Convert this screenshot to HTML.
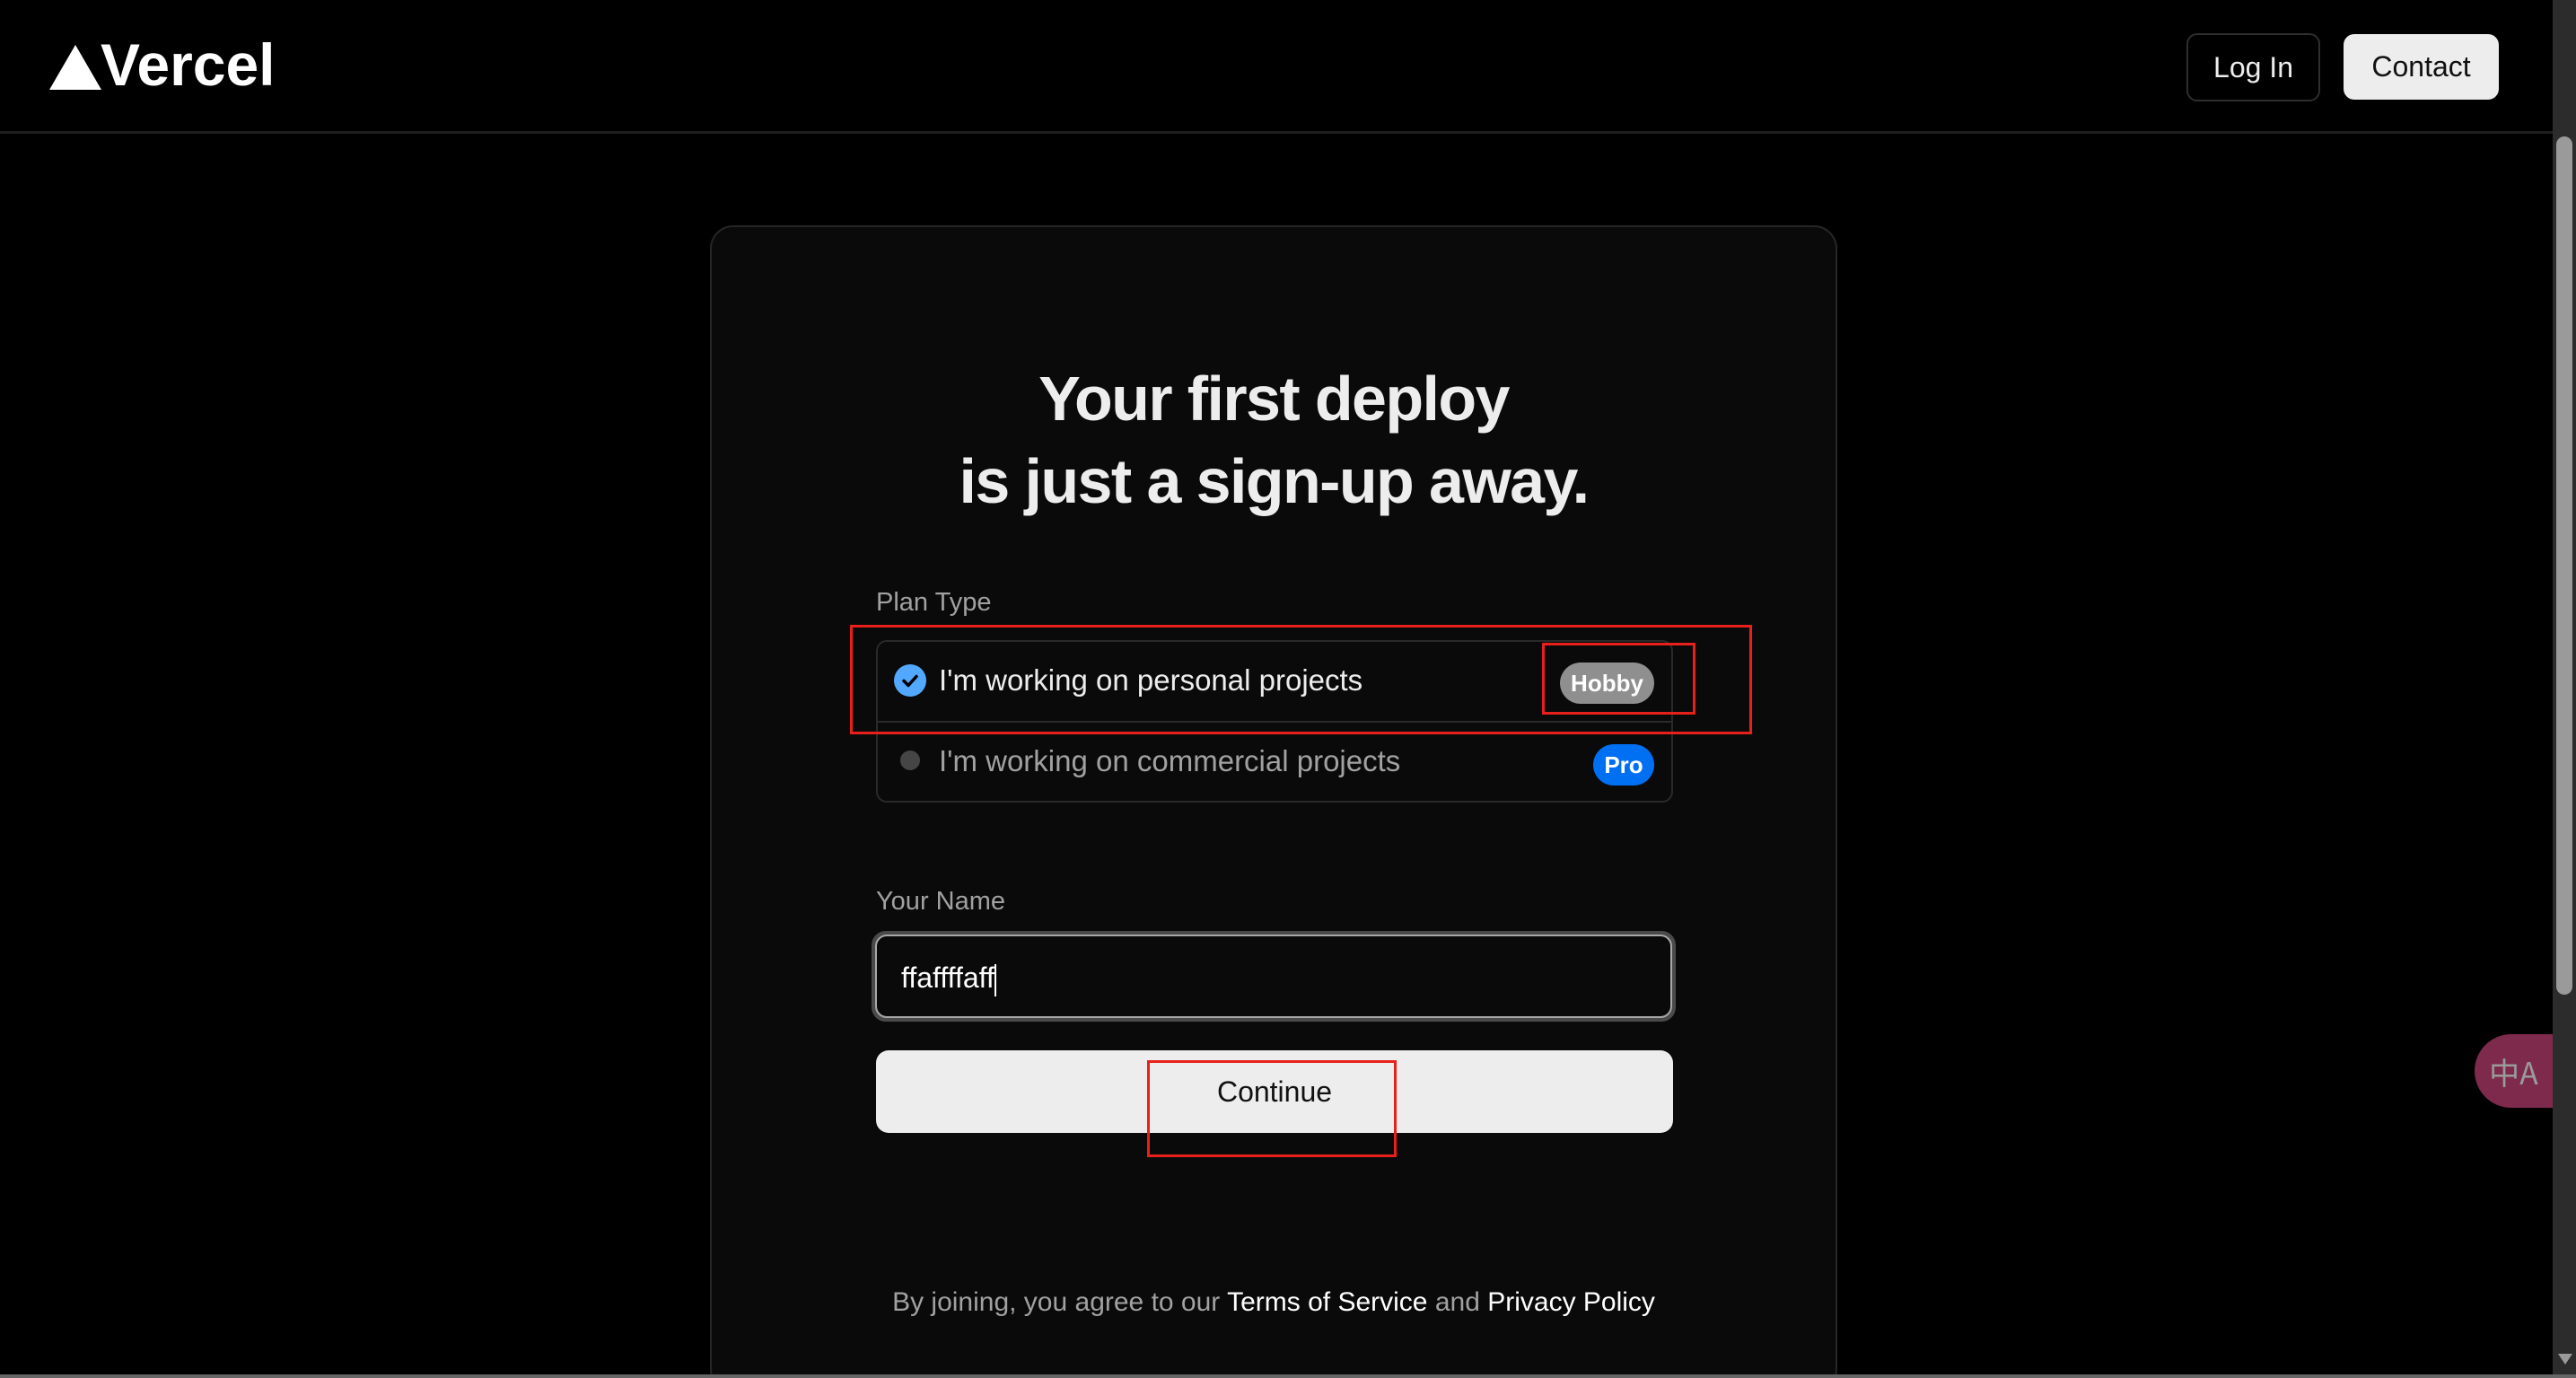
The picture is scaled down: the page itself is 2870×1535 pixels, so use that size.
<!DOCTYPE html>
<html style="overflow:hidden;width:2870px;height:1535px"><head><meta charset="utf-8"><style>
*{box-sizing:border-box;margin:0;padding:0}
body{width:2870px;height:1535px;background:#000;font-family:"Liberation Sans",sans-serif;position:relative;overflow:hidden;color:#ededed}
.abs{position:absolute}
.hdr{left:0;top:0;width:2844px;height:149px;border-bottom:3px solid #1f1f1f}
.btn{position:absolute;display:flex;align-items:center;justify-content:center;font-size:32px;border-radius:12px}
.card{left:791px;top:251px;width:1256px;height:1300px;background:#0a0a0a;border:2px solid #262626;border-radius:26px}
h1{position:absolute;left:791px;width:1256px;text-align:center;font-size:70px;font-weight:bold;letter-spacing:-1.6px;color:#ededed;line-height:92px;top:398px}
.lbl{font-size:29px;color:#a1a1a1}
.red{position:absolute;border:3px solid #e8201c}
</style></head><body>
<div class="abs hdr"></div>
<svg class="abs" style="left:55px;top:50px" width="58" height="50" viewBox="0 0 58 50"><polygon points="29,0 58,50 0,50" fill="#fff"/></svg>
<div class="abs" style="left:112px;top:36px;font-size:66px;font-weight:bold;color:#fff;line-height:72px">Vercel</div>
<div class="btn" style="left:2436px;top:37px;width:149px;height:76px;border:2px solid #2e2e2e;color:#ededed">Log In</div>
<div class="btn" style="left:2611px;top:38px;width:173px;height:73px;background:#ededed;color:#111">Contact</div>
<div class="abs card"></div>
<div class="abs" style="left:2844px;top:0;width:26px;height:1535px;background:#2c2c2c"></div>
<div class="abs" style="left:2848px;top:152px;width:18px;height:956px;background:#9a9a9a;border-radius:9px"></div>
<div class="abs" style="left:2850px;top:1508px;width:0;height:0;border-left:8px solid transparent;border-right:8px solid transparent;border-top:12px solid #9a9a9a"></div>
<div class="abs" style="left:0;top:1531px;width:2870px;height:4px;background:#666"></div>
<div class="abs" style="left:2757px;top:1152px;width:87px;height:82px;background:#7e2a4c;border-radius:41px 0 0 41px;color:#9a9a9a;font-size:34px;display:flex;align-items:center;justify-content:center;font-family:'Noto Sans CJK SC',sans-serif">中A</div>
<h1>Your first deploy<br>is just a sign-up away.</h1>
<div class="abs lbl" style="left:976px;top:655px">Plan Type</div>
<div class="abs" style="left:976px;top:713px;width:888px;height:181px;border:2px solid #2a2a2a;border-radius:12px"></div>
<div class="abs" style="left:977px;top:803px;width:886px;height:2px;background:#2a2a2a"></div>
<svg class="abs" style="left:996px;top:740px" width="36" height="36" viewBox="0 0 36 36"><circle cx="18" cy="18" r="18" fill="#52a8ff"/><path d="M11 18.5l5 5 9-10" stroke="#000" stroke-width="3.5" fill="none" stroke-linecap="round" stroke-linejoin="round"/></svg>
<div class="abs" style="left:1046px;top:739px;font-size:33px;color:#ededed">I'm working on personal projects</div>
<div class="abs" style="left:1738px;top:738px;width:105px;height:46px;border-radius:23px;background:#8f8f8f;color:#fff;font-size:26px;font-weight:bold;display:flex;align-items:center;justify-content:center">Hobby</div>
<div class="abs" style="left:1003px;top:836px;width:22px;height:22px;border-radius:50%;background:#454545"></div>
<div class="abs" style="left:1046px;top:829px;font-size:33px;color:#a1a1a1">I'm working on commercial projects</div>
<div class="abs" style="left:1775px;top:829px;width:68px;height:46px;border-radius:23px;background:#0070f3;color:#fff;font-size:26px;font-weight:bold;display:flex;align-items:center;justify-content:center">Pro</div>
<div class="abs lbl" style="left:976px;top:988px">Your Name</div>
<div class="abs" style="left:971px;top:1037px;width:896px;height:101px;border:5px solid #4a4a4a;border-radius:16px;background:#0a0a0a"></div>
<div class="abs" style="left:975px;top:1041px;width:888px;height:93px;border:2px solid #a8a8a8;border-radius:13px"></div>
<div class="abs" style="left:1004px;top:1071px;font-size:32px;color:#fff">ffaffffaff<span style="display:inline-block;width:2px;height:36px;background:#fff;vertical-align:middle"></span></div>
<div class="abs" style="left:976px;top:1170px;width:888px;height:92px;border-radius:14px;background:#ededed;color:#111;font-size:32px;display:flex;align-items:center;justify-content:center">Continue</div>
<div class="abs" style="left:791px;width:1256px;top:1434px;text-align:center;font-size:30px;color:#a1a1a1">By joining, you agree to our <span style="color:#fff">Terms of Service</span> and <span style="color:#fff">Privacy Policy</span></div>
<div class="red" style="left:947px;top:696px;width:1005px;height:122px"></div>
<div class="red" style="left:1718px;top:716px;width:171px;height:80px"></div>
<div class="red" style="left:1278px;top:1181px;width:278px;height:108px"></div>
</body></html>
